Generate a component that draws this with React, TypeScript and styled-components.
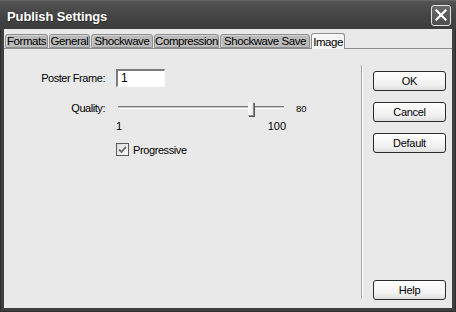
import { createGlobalStyle } from "styled-components";
import styled from "styled-components";

const GlobalStyle = createGlobalStyle`
  html, body {
    margin: 0;
    padding: 0;
    background: #3f3f3f;
  }
  body {
    font-family: "Liberation Sans", Arial, sans-serif;
    font-size: 11px;
    color: #000;
  }
`;

const Window = styled.div`
  width: 456px;
  height: 312px;
  box-sizing: border-box;
  background: #3f3f3f;
  padding: 0 4px 4px;
  display: flex;
  flex-direction: column;
  box-shadow: inset 1px 0 0 #2e2e2e, inset -1px 0 0 #2e2e2e,
    inset 0 -1px 0 #2e2e2e;
`;

const TitleBar = styled.div`
  height: 29px;
  margin: 0 -4px;
  padding: 0 5px 0 7px;
  box-sizing: border-box;
  display: flex;
  align-items: center;
  justify-content: space-between;
  background: linear-gradient(#6b6b6b 0, #525252 2px, #474747 45%, #3c3c3c 100%);
`;

const Title = styled.span`
  padding-top: 3px;
  font-size: 13px;
  font-weight: bold;
  color: #fff;
  letter-spacing: -0.1px;
  text-shadow: 1px 1px 0 #2a2a2a;
`;

const CloseButton = styled.button`
  width: 20px;
  height: 21px;
  margin-top: 1px;
  padding: 0;
  border: 1px solid #e4e4e4;
  border-radius: 3px;
  background: linear-gradient(#6a6a6a, #4e4e4e);
  display: flex;
  align-items: center;
  justify-content: center;
`;

const Client = styled.div`
  flex: 1;
  display: flex;
  flex-direction: column;
  background: #e9e9e9;
  padding-top: 3px;
`;

const TabStrip = styled.div`
  display: flex;
  align-items: flex-end;
  gap: 1px;
  height: 16px;
  padding-left: 1px;
  border-bottom: 1px solid #8e8e8e;
`;

const Tab = styled.div<{ $w: number; $active?: boolean }>`
  width: ${({ $w }) => $w}px;
  height: ${({ $active }) => ($active ? 16 : 14)}px;
  margin-bottom: ${({ $active }) => ($active ? -1 : 0)}px;
  box-sizing: border-box;
  border: 1px solid #8e8e8e;
  border-bottom: ${({ $active }) => ($active ? "none" : "1px solid #8e8e8e")};
  border-radius: 3px 3px 0 0;
  background: ${({ $active }) => ($active ? "#f6f6f6" : "#bababa")};
  box-shadow: inset 1px 1px 0 ${({ $active }) => ($active ? "#fff" : "#d2d2d2")};
  display: flex;
  align-items: center;
  justify-content: center;
  font-size: 11.5px;
  letter-spacing: -0.45px;
  line-height: 12px;
  padding-top: ${({ $active }) => ($active ? 1 : 0)}px;
`;

const Body = styled.div`
  flex: 1;
  display: flex;
`;

const Panel = styled.div`
  flex: 1;
  display: flex;
  flex-direction: column;
  padding-top: 20px;
`;

const Row = styled.div<{ $mt: number }>`
  display: flex;
  align-items: center;
  gap: 11px;
  margin-top: ${({ $mt }) => $mt}px;
`;

const Label = styled.span`
  width: 101px;
  text-align: right;
  letter-spacing: -0.45px;
`;

const TextBox = styled.div`
  width: 49px;
  height: 18px;
  box-sizing: border-box;
  background: #fff;
  border-top: 2px solid #7c7c7c;
  border-left: 2px solid #7c7c7c;
  border-right: 1px solid #fafafa;
  border-bottom: 1px solid #fafafa;
  padding: 1px 0 0 3px;
  font-size: 12px;
  line-height: 13px;
`;

const Slider = styled.div`
  position: relative;
  width: 166px;
  height: 16px;
  margin-left: 2px;
`;

const Track = styled.div`
  position: absolute;
  left: 0;
  right: 0;
  top: 6px;
  height: 3px;
  box-sizing: border-box;
  background: #c8c8c8;
  border-top: 1px solid #7a7a7a;
  border-bottom: 1px solid #fff;
`;

const Thumb = styled.div`
  position: absolute;
  top: 2px;
  width: 6px;
  height: 14px;
  box-sizing: border-box;
  background: linear-gradient(90deg, #fdfdfd, #e4e4e4);
  border: 1px solid #8a8a8a;
  border-left-color: #f4f4f4;
  border-top-color: #f4f4f4;
  box-shadow: 1px 1px 0 #555;
`;

const Value = styled.span`
  margin-left: 1px;
  font-size: 9.5px;
`;

const Scale = styled.div`
  width: 170px;
  margin-left: 112px;
  margin-top: 4px;
  display: flex;
  justify-content: space-between;
  font-size: 11px;
  line-height: 13px;
`;

const CheckRow = styled.label`
  display: flex;
  align-items: center;
  gap: 4px;
  margin: 10px 0 0 112px;
  letter-spacing: -0.4px;
`;

const CheckBox = styled.span`
  width: 13px;
  height: 13px;
  box-sizing: border-box;
  border: 1px solid #5a5a5a;
  background: linear-gradient(135deg, #dcdcdc, #fbfbfb);
  display: flex;
  align-items: center;
  justify-content: center;
`;

const Separator = styled.div`
  width: 1px;
  margin: 16px 0 9px;
  background: #a5a5a5;
  border-right: 1px solid #fff;
`;

const Buttons = styled.div`
  width: 73px;
  margin: 0 6px 0 10px;
  padding: 22px 0 8px;
  display: flex;
  flex-direction: column;
  gap: 11px;
`;

const Button = styled.button<{ $push?: boolean }>`
  height: 20px;
  width: 73px;
  margin-top: ${({ $push }) => ($push ? "auto" : "0")};
  padding: 0;
  border: 1px solid #2a2a2a;
  border-radius: 3px;
  background: linear-gradient(#ffffff, #f1f1f1 70%, #dedede);
  font-family: "Liberation Sans", Arial, sans-serif;
  font-size: 11px;
  letter-spacing: -0.3px;
  color: #000;
`;

const tabs = [
  { name: "Formats", w: 43 },
  { name: "General", w: 41 },
  { name: "Shockwave", w: 62 },
  { name: "Compression", w: 65 },
  { name: "Shockwave Save", w: 90 },
  { name: "Image", w: 34, active: true },
];

const quality = 80;
const sliderWidth = 166;
const thumbLeft = Math.round(((quality - 1) / 99) * (sliderWidth - 6)) + 2;

export default function App() {
  return (
    <>
      <GlobalStyle />
      <Window>
        <TitleBar>
          <Title>Publish Settings</Title>
          <CloseButton>
            <svg width="12" height="12" viewBox="0 0 12 12">
              <path
                d="M1.5 1.5 L10.5 10.5 M10.5 1.5 L1.5 10.5"
                stroke="#fff"
                strokeWidth="2.2"
                strokeLinecap="square"
              />
            </svg>
          </CloseButton>
        </TitleBar>
        <Client>
          <TabStrip>
            {tabs.map((t) => (
              <Tab key={t.name} $w={t.w} $active={t.active}>
                {t.name}
              </Tab>
            ))}
          </TabStrip>
          <Body>
            <Panel>
              <Row $mt={0}>
                <Label>Poster Frame:</Label>
                <TextBox>1</TextBox>
              </Row>
              <Row $mt={13}>
                <Label>Quality:</Label>
                <Slider>
                  <Track />
                  <Thumb style={{ left: thumbLeft }} />
                </Slider>
                <Value>{quality}</Value>
              </Row>
              <Scale>
                <span>1</span>
                <span>100</span>
              </Scale>
              <CheckRow>
                <CheckBox>
                  <svg width="9" height="9" viewBox="0 0 9 9">
                    <path
                      d="M1 4.5 L3.5 7 L8 1.8"
                      fill="none"
                      stroke="#6a6a6a"
                      strokeWidth="1.8"
                    />
                  </svg>
                </CheckBox>
                Progressive
              </CheckRow>
            </Panel>
            <Separator />
            <Buttons>
              <Button>OK</Button>
              <Button>Cancel</Button>
              <Button>Default</Button>
              <Button $push>Help</Button>
            </Buttons>
          </Body>
        </Client>
      </Window>
    </>
  );
}
